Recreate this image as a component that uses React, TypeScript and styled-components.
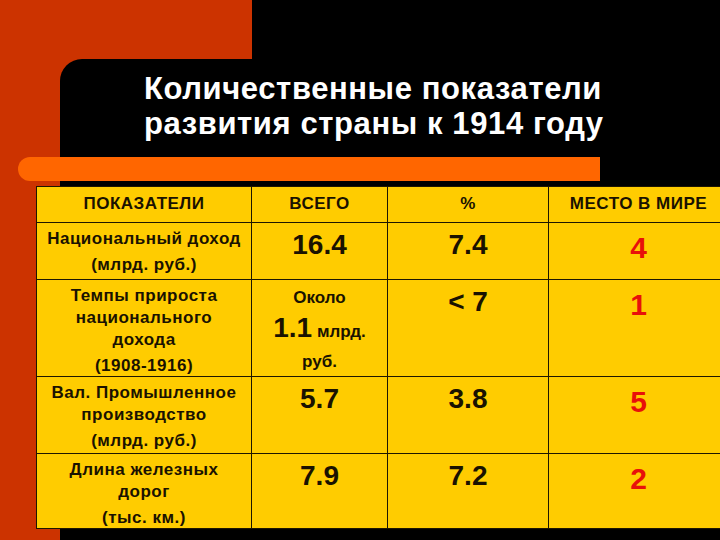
import styled, { createGlobalStyle } from 'styled-components';

const GlobalStyle = createGlobalStyle`
  html, body {
    margin: 0;
    padding: 0;
    background: #000;
  }
  * {
    box-sizing: border-box;
  }
`;

const Slide = styled.div`
  position: relative;
  width: 720px;
  height: 540px;
  overflow: hidden;
  background: #cc3300;
  font-family: 'Liberation Sans', Arial, sans-serif;
  padding-top: 71px;

  /* black block at the top right */
  &::before {
    content: '';
    position: absolute;
    left: 252px;
    top: 0;
    right: 0;
    height: 60px;
    background: #000;
  }

  /* black panel with the rounded corner */
  &::after {
    content: '';
    position: absolute;
    left: 60px;
    top: 59px;
    right: 0;
    bottom: 0;
    background: #000;
    border-top-left-radius: 22px;
  }
`;

const Content = styled.div`
  position: relative;
  z-index: 1;
  display: flex;
  flex-direction: column;
`;

const Title = styled.h1`
  margin: 0 0 0 144px;
  color: #fff;
  font-size: 31px;
  line-height: 35px;
  letter-spacing: 0.6px;
  font-weight: 700;
`;

const Bar = styled.div`
  margin: 16px 0 0 18px;
  width: 582px;
  height: 24px;
  background: #ff6600;
  border-radius: 12px 0 0 12px;
`;

const Table = styled.div`
  margin: 5px 0 0 36px;
  display: grid;
  grid-template-columns: 215px 136px 161px 180px;
  grid-template-rows: 36px 57px 97px 77px 75px;
  background: #ffcc00;
  border-top: 1px solid #1e1600;
  border-left: 1px solid #1e1600;
  color: #1a1200;
`;

const Cell = styled.div`
  border-right: 1px solid #1e1600;
  border-bottom: 1px solid #1e1600;
  text-align: center;
  font-weight: 700;
`;

const HeadCell = styled(Cell)`
  font-size: 17px;
  line-height: 33px;
  letter-spacing: 0.5px;
`;

const LabelCell = styled(Cell)`
  padding: 5px 0 0;
  font-size: 17px;
  line-height: 22px;
  letter-spacing: 0.5px;
`;

const Unit = styled.div`
  margin-top: 4px;
`;

const ValueCell = styled(Cell)`
  padding-top: 6px;
  font-size: 28px;
  line-height: 32px;
`;

const RankCell = styled(Cell)`
  padding-top: 8px;
  font-size: 30px;
  line-height: 34px;
  color: #e8100a;
`;

const StackCell = styled(Cell)`
  padding-top: 7px;
  font-size: 17px;
  line-height: 22px;
`;

const BigLine = styled.div`
  line-height: 38px;
`;

const Big = styled.span`
  font-size: 28px;
`;

type Row = {
  label: string[];
  unit: string;
  total: string;
  percent: string;
  rank: string;
};

const rows: Row[] = [
  { label: ['Национальный доход'], unit: '(млрд. руб.)', total: '16.4', percent: '7.4', rank: '4' },
  { label: ['Темпы прироста', 'национального', 'дохода'], unit: '(1908-1916)', total: '', percent: '< 7', rank: '1' },
  { label: ['Вал. Промышленное', 'производство'], unit: '(млрд. руб.)', total: '5.7', percent: '3.8', rank: '5' },
  { label: ['Длина железных', 'дорог'], unit: '(тыс. км.)', total: '7.9', percent: '7.2', rank: '2' },
];

export default function App() {
  return (
    <>
      <GlobalStyle />
      <Slide>
        <Content>
          <Title>
            Количественные показатели
            <br />
            развития страны к 1914 году
          </Title>
          <Bar />
          <Table>
            <HeadCell>ПОКАЗАТЕЛИ</HeadCell>
            <HeadCell>ВСЕГО</HeadCell>
            <HeadCell>%</HeadCell>
            <HeadCell>МЕСТО В МИРЕ</HeadCell>
            {rows.map((row, i) => (
              <>
                <LabelCell key={`l${i}`}>
                  {row.label.map((line) => (
                    <div key={line}>{line}</div>
                  ))}
                  <Unit>{row.unit}</Unit>
                </LabelCell>
                {row.total ? (
                  <ValueCell key={`t${i}`}>{row.total}</ValueCell>
                ) : (
                  <StackCell key={`t${i}`}>
                    <div>Около</div>
                    <BigLine>
                      <Big>1.1</Big> млрд.
                    </BigLine>
                    <div>руб.</div>
                  </StackCell>
                )}
                <ValueCell key={`p${i}`}>{row.percent}</ValueCell>
                <RankCell key={`r${i}`}>{row.rank}</RankCell>
              </>
            ))}
          </Table>
        </Content>
      </Slide>
    </>
  );
}
